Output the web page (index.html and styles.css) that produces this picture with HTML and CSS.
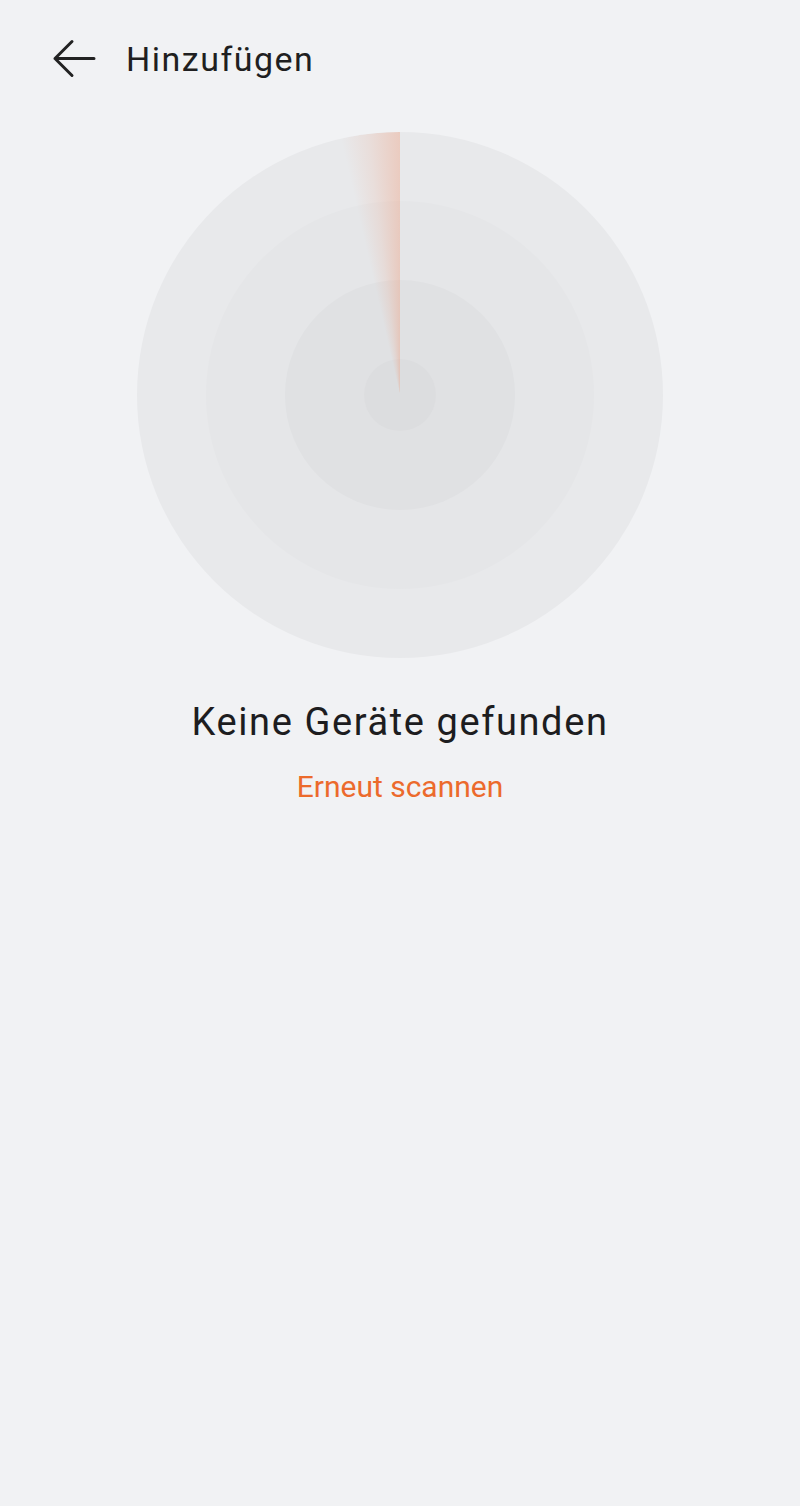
FILE: index.html
```html
<!DOCTYPE html>
<html lang="de">
<head>
<meta charset="utf-8">
<link rel="stylesheet" href="styles.css">
</head>
<body>
<div class="page">
  <header class="topbar">
    <svg class="back" width="44" height="40" viewBox="0 0 44 40" aria-hidden="true">
      <path d="M42 19.5 H3 M20 2.5 L3 19.5 L20 36.5" fill="none" stroke="#222" stroke-width="3" stroke-linecap="round" stroke-linejoin="round"/>
    </svg>
    <h1 class="title">Hinzufügen</h1>
  </header>
  <main class="content">
    <div class="radar">
      <div class="ring ring2">
        <div class="ring ring3">
          <div class="ring ring4"></div>
        </div>
      </div>
      <div class="sweep"></div>
    </div>
    <p class="status">Keine Geräte gefunden</p>
    <a class="rescan" href="#">Erneut scannen</a>
  </main>
</div>
</body>
</html>
```
FILE: styles.css
```css
html, body {
  margin: 0;
  padding: 0;
  background: #f1f2f4;
}
body {
  font-family: Roboto, "Noto Sans", "Liberation Sans", sans-serif;
  color: #1d1d1f;
}
.page {
  width: 800px;
  min-height: 1506px;
}
.topbar {
  height: 118px;
  display: flex;
  align-items: center;
  padding-left: 52px;
  box-sizing: border-box;
}
.back {
  display: block;
}
.title {
  margin: 0 0 0 30px;
  font-size: 34px;
  letter-spacing: 1.5px;
  font-weight: 400;
  line-height: 40px;
  color: #1f1f21;
}
.content {
  display: flex;
  flex-direction: column;
  align-items: center;
  padding-top: 14px;
}
.radar {
  position: relative;
  width: 526px;
  height: 526px;
  border-radius: 50%;
  background: #e8e9eb;
  display: flex;
  align-items: center;
  justify-content: center;
  overflow: hidden;
}
.ring {
  border-radius: 50%;
  display: flex;
  align-items: center;
  justify-content: center;
}
.ring2 {
  width: 388px;
  height: 388px;
  background: #e5e6e8;
}
.ring3 {
  width: 230px;
  height: 230px;
  background: #e0e1e3;
}
.ring4 {
  width: 72px;
  height: 72px;
  background: #dcdddf;
}
.sweep {
  position: absolute;
  inset: 0;
  border-radius: 50%;
  background: conic-gradient(from -13deg at 50% 50%,
    rgba(240, 140, 100, 0) 0deg,
    rgba(240, 140, 100, 0.12) 6deg,
    rgba(240, 140, 100, 0.32) 13deg,
    rgba(240, 140, 100, 0) 13deg,
    rgba(240, 140, 100, 0) 360deg);
}
.status {
  margin: 41px 0 0 0;
  font-size: 38px;
  letter-spacing: 1.6px;
  line-height: 46px;
  font-weight: 400;
  color: #1d1d1f;
}
.rescan {
  margin-top: 24px;
  font-size: 30px;
  line-height: 36px;
  color: #ec6a2c;
  text-decoration: none;
}
```
